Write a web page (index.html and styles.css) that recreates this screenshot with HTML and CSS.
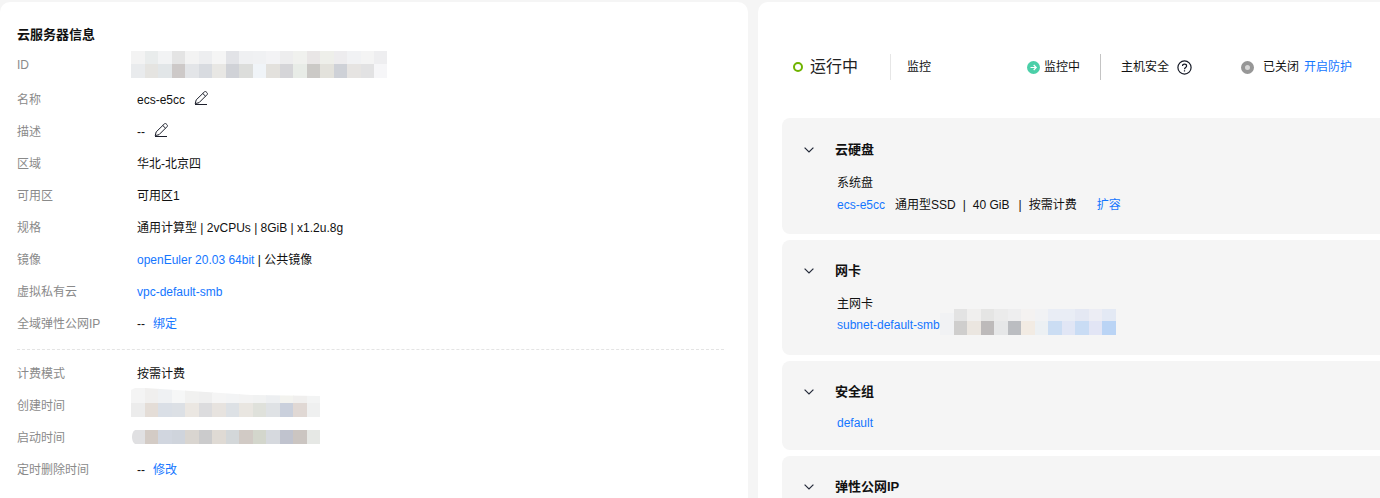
FILE: index.html
```html
<!DOCTYPE html>
<html lang="zh-CN">
<head>
<meta charset="utf-8">
<title>云服务器信息</title>
<link rel="stylesheet" href="styles.css">
</head>
<body>
<main class="page">
  <section class="card info">
    <h2 class="info-title">云服务器信息</h2>
    <div class="row row-id">
      <span class="label">ID</span>
      <svg class="mosaic mosaic-id" width="256" height="27" viewBox="0 0 256 27" shape-rendering="crispEdges" aria-hidden="true">
        <g>
          <rect x="0" y="0" width="14" height="13" fill="#f3f3f3"/><rect x="13.5" y="0" width="14" height="13" fill="#e9ecec"/><rect x="27" y="0" width="14" height="13" fill="#f2f3f4"/><rect x="40.5" y="0" width="14" height="13" fill="#e4e4e4"/><rect x="54" y="0" width="14" height="13" fill="#f3f3f3"/><rect x="67.5" y="0" width="14" height="13" fill="#edeef0"/><rect x="81" y="0" width="14" height="13" fill="#f5f5f5"/><rect x="94.5" y="0" width="14" height="13" fill="#e2e3e7"/><rect x="108" y="0" width="14" height="13" fill="#eff0f2"/><rect x="121.5" y="0" width="14" height="13" fill="#f0f1f3"/><rect x="135" y="0" width="14" height="13" fill="#f3f3f5"/><rect x="148.5" y="0" width="14" height="13" fill="#ededee"/><rect x="162" y="0" width="14" height="13" fill="#f0f1ee"/><rect x="175.5" y="0" width="14" height="13" fill="#e9e6e6"/><rect x="189" y="0" width="14" height="13" fill="#eeefea"/><rect x="202.5" y="0" width="14" height="13" fill="#edecee"/><rect x="216" y="0" width="14" height="13" fill="#f1f2f4"/><rect x="229.5" y="0" width="14" height="13" fill="#f4f4f4"/><rect x="243" y="0" width="13" height="13" fill="#eeeef0"/>
          <rect x="0" y="13" width="14" height="14" fill="#e9ebed"/><rect x="13.5" y="13" width="14" height="14" fill="#e5e4e1"/><rect x="27" y="13" width="14" height="14" fill="#e2e6e8"/><rect x="40.5" y="13" width="14" height="14" fill="#cdc9c8"/><rect x="54" y="13" width="14" height="14" fill="#e3e5e8"/><rect x="67.5" y="13" width="14" height="14" fill="#d8dbe0"/><rect x="81" y="13" width="14" height="14" fill="#e8e7e4"/><rect x="94.5" y="13" width="14" height="14" fill="#d0d2d7"/><rect x="108" y="13" width="14" height="14" fill="#dcdddb"/><rect x="121.5" y="13" width="14" height="14" fill="#f0f4f8"/><rect x="135" y="13" width="14" height="14" fill="#e3e1dd"/><rect x="148.5" y="13" width="14" height="14" fill="#d5d5d8"/><rect x="162" y="13" width="14" height="14" fill="#e8ece7"/><rect x="175.5" y="13" width="14" height="14" fill="#cbc9c6"/><rect x="189" y="13" width="14" height="14" fill="#e3e2dc"/><rect x="202.5" y="13" width="14" height="14" fill="#ced1d7"/><rect x="216" y="13" width="14" height="14" fill="#e6e4e2"/><rect x="229.5" y="13" width="14" height="14" fill="#e2e2e3"/><rect x="243" y="13" width="13" height="14" fill="#f6f6f8"/>
        </g>
      </svg>
    </div>
    <div class="row">
      <span class="label">名称</span>
      <span class="value">ecs-e5cc</span>
      <svg class="pencil pencil-name" width="14" height="14" viewBox="0 0 14 14" fill="none" stroke="#1c1f2b" stroke-width="1" aria-hidden="true"><path d="M10.4.9C11 .4 11.7.4 12.3 1L13 1.7C13.6 2.3 13.6 3 13.1 3.6L5 11.7 1.2 12.6 2.2 8.9Z"/><path d="M8.8 2.5 11.5 5.2"/><path d="M1 13.5H13"/></svg>
    </div>
    <div class="row">
      <span class="label">描述</span>
      <span class="value">--</span>
      <svg class="pencil pencil-desc" width="14" height="14" viewBox="0 0 14 14" fill="none" stroke="#1c1f2b" stroke-width="1" aria-hidden="true"><path d="M10.4.9C11 .4 11.7.4 12.3 1L13 1.7C13.6 2.3 13.6 3 13.1 3.6L5 11.7 1.2 12.6 2.2 8.9Z"/><path d="M8.8 2.5 11.5 5.2"/><path d="M1 13.5H13"/></svg>
    </div>
    <div class="row"><span class="label">区域</span><span class="value">华北-北京四</span></div>
    <div class="row"><span class="label">可用区</span><span class="value">可用区1</span></div>
    <div class="row"><span class="label">规格</span><span class="value">通用计算型 | 2vCPUs | 8GiB | x1.2u.8g</span></div>
    <div class="row"><span class="label">镜像</span><span class="value"><a class="link" href="#">openEuler 20.03 64bit</a> | 公共镜像</span></div>
    <div class="row"><span class="label">虚拟私有云</span><a class="value link" href="#">vpc-default-smb</a></div>
    <div class="row"><span class="label">全域弹性公网IP</span><span class="value">--</span><a class="link action" href="#">绑定</a></div>
    <hr class="divider">
    <div class="row"><span class="label">计费模式</span><span class="value">按需计费</span></div>
    <div class="row">
      <span class="label">创建时间</span>
      <svg class="mosaic mosaic-created" width="189" height="29" viewBox="0 0 189 29" shape-rendering="crispEdges" aria-hidden="true">
        <defs><clipPath id="created-top"><path d="M0 2 4 0H14L60 3 120 7 189 8V29H0Z"/></clipPath></defs>
        <g clip-path="url(#created-top)">
          <rect x="0" y="0" width="14" height="15" fill="#f4f4f4"/><rect x="13.5" y="0" width="14" height="15" fill="#f0efee"/><rect x="27" y="0" width="14" height="15" fill="#eff1f3"/><rect x="40.5" y="0" width="14" height="15" fill="#f6f7f7"/><rect x="54" y="0" width="14" height="15" fill="#f1f1f0"/><rect x="67.5" y="0" width="14" height="15" fill="#efefef"/><rect x="81" y="0" width="14" height="15" fill="#f5f5f5"/><rect x="94.5" y="0" width="14" height="15" fill="#f3f4f5"/><rect x="108" y="0" width="14" height="15" fill="#f3f3f3"/><rect x="121.5" y="0" width="14" height="15" fill="#f1f2f2"/><rect x="135" y="0" width="14" height="15" fill="#edeff1"/><rect x="148.5" y="0" width="14" height="15" fill="#f3f3ef"/><rect x="162" y="0" width="14" height="15" fill="#f0efee"/><rect x="175.5" y="0" width="13.5" height="15" fill="#f3f4f4"/>
          <rect x="0" y="15" width="14" height="14" fill="#ececec"/><rect x="13.5" y="15" width="14" height="14" fill="#e4ddd7"/><rect x="27" y="15" width="14" height="14" fill="#dadfe6"/><rect x="40.5" y="15" width="14" height="14" fill="#dce0e5"/><rect x="54" y="15" width="14" height="14" fill="#ebe7e2"/><rect x="67.5" y="15" width="14" height="14" fill="#dcdcde"/><rect x="81" y="15" width="14" height="14" fill="#e7e3df"/><rect x="94.5" y="15" width="14" height="14" fill="#dde1e5"/><rect x="108" y="15" width="14" height="14" fill="#e9e6e1"/><rect x="121.5" y="15" width="14" height="14" fill="#dfe1db"/><rect x="135" y="15" width="14" height="14" fill="#dfe2e5"/><rect x="148.5" y="15" width="14" height="14" fill="#cad0dc"/><rect x="162" y="15" width="14" height="14" fill="#e0d8d4"/><rect x="175.5" y="15" width="13.5" height="14" fill="#eff0f0"/>
        </g>
      </svg>
    </div>
    <div class="row">
      <span class="label">启动时间</span>
      <svg class="mosaic mosaic-started" width="189" height="14" viewBox="0 0 189 14" shape-rendering="crispEdges" aria-hidden="true">
        <path d="M14 0H4Q1 2 1 7T4 14H14Z" fill="#e0e0e2" shape-rendering="auto"/>
        <rect x="13.5" width="14" height="14" fill="#d3cbc5"/><rect x="27" width="14" height="14" fill="#d1d6df"/><rect x="40.5" width="14" height="14" fill="#cfd4dc"/><rect x="54" width="14" height="14" fill="#d9d5d0"/><rect x="67.5" width="14" height="14" fill="#cbcbcc"/><rect x="81" width="14" height="14" fill="#dfdad4"/><rect x="94.5" width="14" height="14" fill="#d3d7d9"/><rect x="108" width="14" height="14" fill="#d1cac5"/><rect x="121.5" width="14" height="14" fill="#d3d6cc"/><rect x="135" width="14" height="14" fill="#d6d9de"/><rect x="148.5" width="14" height="14" fill="#c0c3ce"/><rect x="162" width="14" height="14" fill="#cbc5c1"/><rect x="175.5" width="13.5" height="14" fill="#e6e8e5"/>
      </svg>
    </div>
    <div class="row"><span class="label">定时删除时间</span><span class="value">--</span><a class="link action" href="#">修改</a></div>
  </section>

  <section class="card detail">
    <header class="status">
      <div class="status-run">
        <span class="run-dot"></span>
        <span class="run-text">运行中</span>
      </div>
      <div class="status-monitor">
        <span class="status-name">监控</span>
        <span class="monitor-state">
          <svg class="state-icon" width="13" height="13" viewBox="0 0 13 13" aria-hidden="true"><circle cx="6.5" cy="6.5" r="6.5" fill="#4bcfa8"/><path d="M3.5 6.5H9M6.7 4 9.2 6.5 6.7 9" fill="none" stroke="#fff" stroke-width="1.2"/></svg>
          监控中
        </span>
      </div>
      <div class="status-security">
        <span class="status-name">主机安全</span>
        <svg class="help" width="15" height="15" viewBox="0 0 15 15" fill="none" stroke="#161a26" stroke-width="1.2" aria-hidden="true"><circle cx="7.5" cy="7.5" r="6.6"/><path d="M5.5 6C5.5 3.5 9.6 3.6 9.6 5.9 9.6 7.5 7.5 7.4 7.5 9.2"/><path d="M7.5 10.3V11.5"/></svg>
        <svg class="closed-icon" width="13" height="13" viewBox="0 0 13 13" aria-hidden="true"><circle cx="6.5" cy="6.5" r="4.5" fill="#d8d8d8" stroke="#979797" stroke-width="4"/></svg>
        <span class="closed-text">已关闭</span>
        <a class="link protect" href="#">开启防护</a>
      </div>
    </header>

    <article class="panel panel-disk">
      <h3 class="panel-title"><svg class="chevron" width="10" height="6" viewBox="0 0 10 6" fill="none" stroke="#252b3a" stroke-width="1.2" aria-hidden="true"><path d="M.6.6 5 5 9.4.6"/></svg>云硬盘</h3>
      <div class="panel-body">
        <div class="item-name">系统盘</div>
        <div class="item-line">
          <a class="link" href="#">ecs-e5cc</a>
          <span class="disk-meta">通用型SSD</span><span class="bar">|</span><span>40 GiB</span><span class="bar bar-wide">|</span><span>按需计费</span>
          <a class="link expand" href="#">扩容</a>
        </div>
      </div>
    </article>

    <article class="panel panel-nic">
      <h3 class="panel-title"><svg class="chevron" width="10" height="6" viewBox="0 0 10 6" fill="none" stroke="#252b3a" stroke-width="1.2" aria-hidden="true"><path d="M.6.6 5 5 9.4.6"/></svg>网卡</h3>
      <div class="panel-body">
        <div class="item-name">主网卡</div>
        <div class="item-line">
          <a class="link" href="#">subnet-default-smb</a>
          <svg class="mosaic mosaic-nic" width="176" height="26" viewBox="0 0 176 26" shape-rendering="crispEdges" aria-hidden="true">
            <rect x="0" y="4" width="14" height="22" fill="#f1f2f4"/>
            <rect x="13.5" width="14" height="12" fill="#e3e3e3"/><rect x="27" width="14" height="12" fill="#f0efee"/><rect x="40.5" width="14" height="12" fill="#e5e5e4"/><rect x="54" width="14" height="12" fill="#ebebeb"/><rect x="67.5" width="14" height="12" fill="#eeeeef"/><rect x="81" width="14" height="12" fill="#f4f2f1"/><rect x="94.5" width="14" height="12" fill="#f1f2f4"/><rect x="108" width="14" height="12" fill="#e9edf5"/><rect x="121.5" width="14" height="12" fill="#e9edf5"/><rect x="135" width="14" height="12" fill="#e4e8f3"/><rect x="148.5" width="14" height="12" fill="#ecedf4"/><rect x="162" width="14" height="12" fill="#e3e9f4"/>
            <rect x="13.5" y="12" width="14" height="14" fill="#cfcecd"/><rect x="27" y="12" width="14" height="14" fill="#ebe6e0"/><rect x="40.5" y="12" width="14" height="14" fill="#bdbaba"/><rect x="54" y="12" width="14" height="14" fill="#e6e7e8"/><rect x="67.5" y="12" width="14" height="14" fill="#bbbdc1"/><rect x="81" y="12" width="14" height="14" fill="#f2ebe3"/><rect x="94.5" y="12" width="14" height="14" fill="#ecf0f3"/><rect x="108" y="12" width="14" height="14" fill="#cbddf3"/><rect x="121.5" y="12" width="14" height="14" fill="#e1e6f5"/><rect x="135" y="12" width="14" height="14" fill="#c9dcf4"/><rect x="148.5" y="12" width="14" height="14" fill="#e2e5f5"/><rect x="162" y="12" width="14" height="14" fill="#bad4f5"/>
          </svg>
        </div>
      </div>
    </article>

    <article class="panel panel-group">
      <h3 class="panel-title"><svg class="chevron" width="10" height="6" viewBox="0 0 10 6" fill="none" stroke="#252b3a" stroke-width="1.2" aria-hidden="true"><path d="M.6.6 5 5 9.4.6"/></svg>安全组</h3>
      <div class="panel-body">
        <div class="item-line"><a class="link" href="#">default</a></div>
      </div>
    </article>

    <article class="panel panel-eip">
      <h3 class="panel-title"><svg class="chevron" width="10" height="6" viewBox="0 0 10 6" fill="none" stroke="#252b3a" stroke-width="1.2" aria-hidden="true"><path d="M.6.6 5 5 9.4.6"/></svg>弹性公网IP</h3>
    </article>
  </section>
</main>
</body>
</html>
```

FILE: styles.css
```css
* { box-sizing: border-box; }
html, body { margin: 0; height: 498px; overflow: hidden; }
body {
  background: #f5f5f5;
  color: #111;
  font: 12px/20px "Liberation Sans", "Noto Sans CJK SC", sans-serif;
}
.page { display: flex; gap: 10px; height: 498px; padding-top: 2px; }
.card { background: #fff; border-radius: 10px 10px 0 0; overflow: hidden; }
.info { flex: 0 0 748px; padding: 23px 24px 0 17px; }
.detail { flex: 1; min-width: 0; border-top-right-radius: 0; }
.link { color: #1476ff; text-decoration: none; }
.info-title { margin: 0 0 4px; font-size: 13px; line-height: 20px; font-weight: 700; color: #111; }

.row { display: flex; align-items: flex-start; height: 32px; line-height: 32px; }
.row-id { height: 35px; }
.label { flex: 0 0 120px; color: #8a8a8a; }
.value { color: #111; }
.value .link { color: #1476ff; }
.value.link { color: #1476ff; }
.action { margin-left: 8px; }
.pencil { flex: none; }
.pencil-name { margin: 7px 0 0 9px; }
.pencil-desc { margin: 7px 0 0 9px; }
.mosaic { display: block; flex: none; }
.mosaic-id { margin: 2px 0 0 -6px; }
.mosaic-created { margin: -2px 0 0 -6px; }
.mosaic-started { margin: 8px 0 0 -6px; }
.divider { height: 0; margin: 9px 0 8px; border: 0; border-top: 1px dashed #e4e4e4; }

.status { display: flex; align-items: center; height: 116px; padding: 14px 0 0 35px; }
.status-run { display: flex; align-items: center; width: 98px; height: 26px; border-right: 1px solid #e6e6e6; }
.run-dot { width: 10px; height: 10px; border: 2px solid #6fb300; border-radius: 50%; margin-right: 7px; }
.run-text { font-size: 16px; color: #222; }
.status-monitor { display: flex; align-items: center; justify-content: space-between; width: 210px; height: 26px; padding: 0 20px 0 16px; border-right: 1px solid #c4c4c4; }
.monitor-state { display: flex; align-items: center; gap: 4px; }
.state-icon { display: block; }
.status-security { display: flex; align-items: center; padding-left: 20px; }
.help { margin-left: 8px; }
.closed-icon { margin-left: 49px; }
.closed-text { margin-left: 9px; }
.protect { margin-left: 5px; }

.panel { margin: 0 0 6px 24px; padding-top: 21px; background: #f5f5f5; border-radius: 8px 0 0 8px; }
.panel-disk { height: 116px; padding-top: 22px; }
.panel-nic { height: 115px; }
.panel-group { height: 89px; }
.panel-eip { height: 60px; }
.panel-title { display: flex; align-items: center; margin: 0; font-size: 13px; line-height: 20px; font-weight: 700; color: #111; padding-left: 22px; }
.chevron { margin-right: 21px; }
.panel-body { padding: 13px 0 0 55px; }
.panel-group .panel-body { padding-top: 11px; }
.item-name { height: 20px; margin-bottom: 2px; }
.panel-nic .item-name { margin-bottom: 1px; }
.item-line { display: flex; align-items: center; height: 20px; }
.disk-meta { margin-left: 10px; }
.bar { margin: 0 7px; }
.bar-wide { margin: 0 7px 0 9px; }
.expand { margin-left: 20px; }
.mosaic-nic { align-self: flex-end; }
```
